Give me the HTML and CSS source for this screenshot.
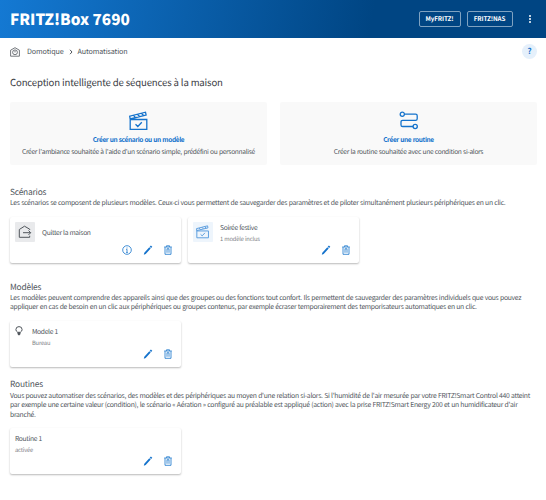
FILE: index.html
```html
<!DOCTYPE html>
<html lang="fr">
<head>
	<meta charset="UTF-8">
	<title>FRITZ!Box 7690</title>
	<link rel="stylesheet" href="styles.css">
</head>

<body>
	<svg class="defs">
		<symbol id="clap" viewBox="0 0 20 20">
			<path d="M1.200 8.5h16.6v9.8H1.200zM1.200 8.5L.7 5.2 16.500 1.2l.6 2.9L1 8M4.500 4.4l2 2.2M8.500 3.3l2 2.2M12.500 2.3l2 2.2M6.500 13.3l2.3 2.2 4-4.3"/>
		</symbol>
		<symbol id="edit" viewBox="0 0 10 10">
			<path class="fill" d="M.8 9.800l.5-2L6.300 2.200l1.400 1.300L2.700 9.100zM6.700 1.800l1.200-1.300 1.400 1.200-1.200 1.400z"/>
		</symbol>
		<symbol id="trash" viewBox="0 0 10 10">
			<path d="M1.2 2h7.6M3.5 1.8V.8h3v1M2 2.2v7.1h6V2.2M4 3.6v4.2M6 3.6v4.2M4 3.8h2"/>
		</symbol>
	</svg>
	<header>
		<h1>FRITZ!Box 7690</h1>
		<nav>
			<a class="btn my">MyFRITZ!</a>
			<a class="btn nas">FRITZ!NAS</a>
			<span class="menu"><i></i><i></i><i></i></span>
		</nav>
	</header>
	<main>
		<div class="crumbs">
			<svg class="home" viewBox="0 0 10 10"><path d="M.6 3.2L5 .7l4.4 2.5v6H.6z"/><circle cx="5" cy="5.3" r="2.4"/><path d="M5 3.7v1.7"/></svg>
			<span>Domotique</span>
			<svg class="arrow" viewBox="0 0 4 6"><path d="M1 .8L3 3 1 5.2"/></svg>
			<span>Automatisation</span>
			<b class="help">?</b>
		</div>
		<h2>Conception intelligente de séquences à la maison</h2>
		<div class="tiles">
			<div class="tile">
				<svg><use href="#clap"/></svg>
				<b>Créer un scénario ou un modèle</b>
				<p>Créer l'ambiance souhaitée à l'aide d'un scénario simple, prédéfini ou personnalisé</p>
			</div>
			<div class="tile">
				<svg viewBox="0 0 20 20"><circle cx="3.3" cy="3.2" r="2.1"/><circle cx="16.2" cy="15.5" r="2.1"/><path d="M5.4 3.2h11.2q1.6 0 1.6 1.6v2.9q0 1.6-1.6 1.6H3.6Q2 9.300 2 10.900v3q0 1.600 1.600 1.600h10.500"/></svg>
				<b>Créer une routine</b>
				<p>Créer la routine souhaitée avec une condition si-alors</p>
			</div>
		</div>
		<section class="scenarios">
			<h3>Scénarios</h3>
			<p>Les scénarios se composent de plusieurs modèles. Ceux-ci vous permettent de sauvegarder des paramètres et de piloter simultanément plusieurs périphériques en un clic.</p>
			<div class="cards">
				<div class="card">
					<span class="pic grey"><svg viewBox="0 0 14 14"><path d="M11.700 5V4.200L6.500 1.200 1.300 4.500v7.800h10.400v-1.600M5 7.700h7.500M10.500 5.500l2.200 2.200-2.200 2.200"/></svg></span>
					<div class="name single">Quitter la maison</div>
					<div class="tools">
						<svg viewBox="0 0 10 10"><circle cx="5" cy="5" r="4.300"/><path d="M5 4.300v3.200M5 2.500v1M4.200 4.400H5M4.200 7.500h1.600"/></svg>
						<svg><use href="#edit"/></svg>
						<svg><use href="#trash"/></svg>
					</div>
				</div>
				<div class="card">
					<span class="pic blue"><svg><use href="#clap"/></svg></span>
					<div class="name">Soirée festive<small>1 modèle inclus</small></div>
					<div class="tools">
						<svg><use href="#edit"/></svg>
						<svg><use href="#trash"/></svg>
					</div>
				</div>
			</div>
		</section>
		<section class="models">
			<h3>Modèles</h3>
			<p>Les modèles peuvent comprendre des appareils ainsi que des groupes ou des fonctions tout confort. Ils permettent de sauvegarder des paramètres individuels que vous pouvez<br>appliquer en cas de besoin en un clic aux périphériques ou groupes contenus, par exemple écraser temporairement des temporisateurs automatiques en un clic.</p>
			<div class="cards">
				<div class="card">
					<svg class="bulb" viewBox="0 0 8 10"><path d="M2.700 6.300Q.9 5.200.9 3.600a3.100 3 0 0 1 6.200 0Q7.100 5.200 5.300 6.300z"/><path class="fill" d="M2.500 6.300h3v1.800L4.600 9.300H3.400l-.9-1.200z"/></svg>
					<div class="name">Modele 1<small>Bureau</small></div>
					<div class="tools">
						<svg><use href="#edit"/></svg>
						<svg><use href="#trash"/></svg>
					</div>
				</div>
			</div>
		</section>
		<section class="routines">
			<h3>Routines</h3>
			<p>Vous pouvez automatiser des scénarios, des modèles et des périphériques au moyen d'une relation si-alors. Si l'humidité de l'air mesurée par votre FRITZ!Smart Control 440 atteint<br>par exemple une certaine valeur (condition), le scénario « Aération » configuré au préalable est appliqué (action) avec la prise FRITZ!Smart Energy 200 et un humidificateur d'air<br>branché.</p>
			<div class="cards">
				<div class="card">
					<div class="name">Routine 1<small>activée</small></div>
					<div class="tools">
						<svg><use href="#edit"/></svg>
						<svg><use href="#trash"/></svg>
					</div>
				</div>
			</div>
		</section>
	</main>
</body>
</html>
```
FILE: styles.css
```css
* {margin:0; padding:0; box-sizing:border-box;}
body {background:#fff; color:#50565c; font:6.8px/9.4px "Noto Sans CJK SC","Noto Sans",sans-serif; height:500px; overflow:hidden; text-rendering:geometricPrecision;}
svg {display:block; fill:none; stroke:currentColor; stroke-width:1;}
.fill {fill:currentColor; stroke:none;}
.defs {display:none;}
header {background:linear-gradient(100deg,#1479d3 0,#004583 68%); color:#fff; display:flex; align-items:center; justify-content:space-between; height:38px; padding:0 15px 0 10px;}
h1 {font-size:15.3px; font-weight:900; line-height:36px;}
nav {display:flex; align-items:center;}
.btn {border:1px solid #7fa2c1; border-radius:2px; font-size:6.3px; font-weight:700; letter-spacing:-.1px; height:16px; line-height:14px; text-align:center; white-space:nowrap;}
.my {width:42px; margin-right:6px;}
.nas {width:46px; margin-right:16.500px;}
.menu {display:flex; flex-direction:column; gap:1px;}
.menu i {background:#fff; border-radius:1px; width:2px; height:2px;}
main {padding:0 9px 0 10px;}
.crumbs {display:flex; align-items:center; height:27px; font-size:7.2px; letter-spacing:-.12px;}
.crumbs span {padding-top:2px;}
.home {width:10px; height:10px; margin-right:7px; stroke-width:.8;}
.arrow {width:4px; height:6px; margin:0 5px;}
.help {background:#e5f0fb; border-radius:50%; color:#1573cc; font-size:8px; line-height:16px; text-align:center; width:15px; height:15px; margin-left:auto;}
h2 {color:#3b4045; font-size:9.6px; font-weight:400; letter-spacing:-.15px; line-height:14px; margin-top:9.6px;}
.tiles {display:flex; gap:13px; margin-top:13.4px;}
.tile {background:#f9f9f9; border-radius:2px; display:flex; flex-direction:column; align-items:center; flex:1; min-width:0; height:63px; padding-top:9px; font-size:6.6px; letter-spacing:-.29px; word-spacing:.3px; white-space:nowrap;}
.tile svg {color:#1573cc; width:20px; height:20px; stroke-width:1.3;}
.tile b {color:#1573cc; font-size:6.5px; letter-spacing:-.36px; word-spacing:.3px; line-height:10px; margin-top:3px;}
.tile p {margin-top:3px;}
section h3 {font-size:8.4px; font-weight:400; letter-spacing:-.2px; line-height:12px;}
section p {letter-spacing:-.29px; word-spacing:.3px; white-space:nowrap;}
.scenarios {padding-top:21px;}
.scenarios p {margin-top:.3px;}
.models {padding-top:18px;}
.models p {margin-top:.4px;}
.routines {padding-top:11.5px;}
.routines p {margin-top:.7px; line-height:9.3px;}
.cards {display:flex; gap:7px; margin-top:9.5px;}
.card {background:#fff; border-radius:2px; box-shadow:0 1px 2px rgba(0,0,0,.28); display:grid; grid-template:24px 1fr / auto 1fr; width:171px; height:45.500px; padding:5px 8px 6px 5px;}
.pic {display:flex; align-items:center; justify-content:center; border-radius:1px; width:20px; height:20px; margin-right:7px;}
.pic svg {width:14px; height:14px;}
.grey {background:#e9eaec;}
.blue {background:#eef5fc; color:#5c9ede;}
.blue svg {stroke-width:1.400;}
.bulb {width:8px; height:10px; margin-right:9px;}
.name {font-size:6.7px; letter-spacing:-.32px; word-spacing:.2px; line-height:10.600px; white-space:nowrap;}
.single {line-height:20px;}
small {color:#7c8186; display:block; font-size:5.800px; letter-spacing:-.2px; line-height:11px;}
.tools {color:#1573cc; display:flex; justify-content:flex-end; gap:10.500px; grid-column:1 / -1;}
.tools svg {width:10px; height:10px; margin-top:-1px; stroke-width:.8;}
```
